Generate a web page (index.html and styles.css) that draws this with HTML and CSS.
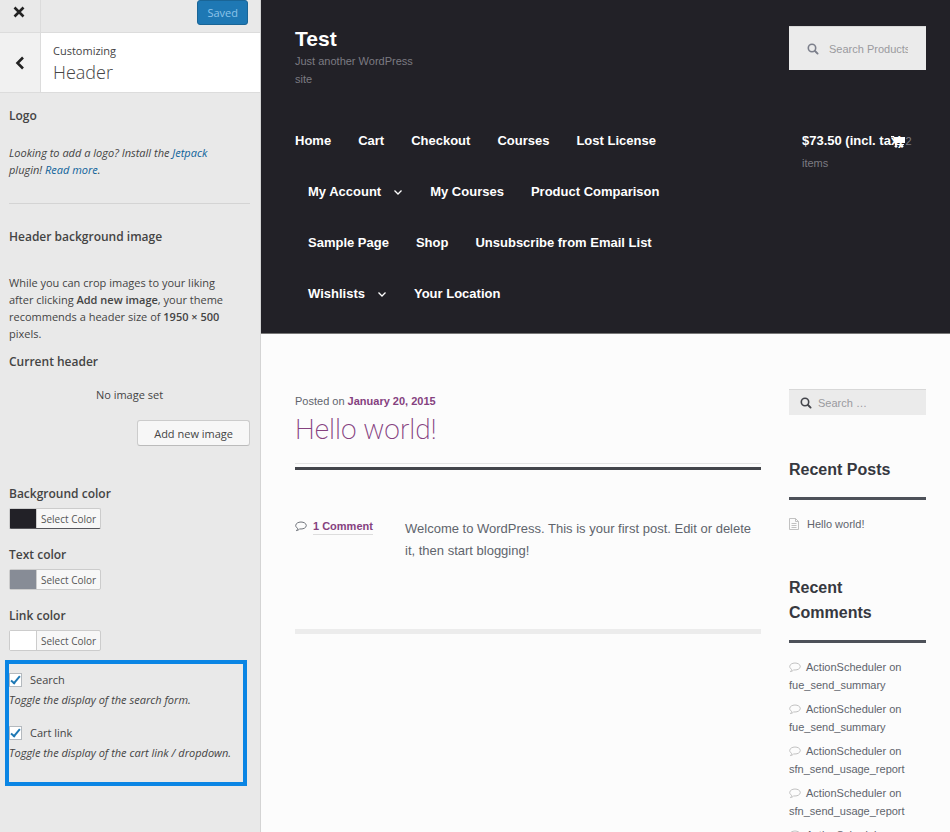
FILE: index.html
```html
<!DOCTYPE html>
<html lang="en">
<head>
    <meta charset="UTF-8">
    <meta name="viewport" content="width=device-width, initial-scale=1.0">
    <title>Customize: Header</title>
    <link rel="stylesheet" href="styles.css">
</head>
<body>
    <!-- Shared icons -->
    <svg class="sprite" aria-hidden="true">
        <symbol id="icon-search" viewBox="0 0 12 12">
            <circle cx="5" cy="5" r="3.7" fill="none" stroke="currentColor" stroke-width="1.6"/>
            <path d="M8 8l2.600 2.600" stroke="currentColor" stroke-width="1.900" stroke-linecap="round"/>
        </symbol>
        <symbol id="icon-comment" viewBox="0 0 12 11">
            <path d="M6 1C3.200 1 .7 2.500 .7 4.500c0 1.200.8 2.200 2 2.900-.1.900-.6 1.600-1.300 2.200 1.300-.1 2.300-.6 3.100-1.700.5.100.9.100 1.500.1 2.800 0 5.300-1.500 5.300-3.500S8.800 1 6 1z" fill="none" stroke="currentColor" stroke-width="0.9"/>
        </symbol>
        <symbol id="icon-chevron" viewBox="0 0 10 10">
            <path d="M1.500 3.500L5 7l3.500-3.500" fill="none" stroke="currentColor" stroke-width="1.300"/>
        </symbol>
    </svg>

    <div class="customizer">
        <div class="controls">
            <div class="top-bar">
                <button class="close-btn" type="button" aria-label="Close">
                    <svg width="12" height="12" viewBox="0 0 12 12"><path d="M1.500 1.500l9 9M10.500 1.500l-9 9" stroke="currentColor" stroke-width="2.600"/></svg>
                </button>
                <button class="save-btn" type="button">Saved</button>
            </div>
            <div class="section-title">
                <button class="back-btn" type="button" aria-label="Back">
                    <svg width="10" height="14" viewBox="0 0 10 14"><path d="M8 1.500L2.500 7 8 12.500" fill="none" stroke="currentColor" stroke-width="2.600"/></svg>
                </button>
                <div class="section-name">
                    <span>Customizing</span>
                    <h1>Header</h1>
                </div>
            </div>

            <div class="panel">
                <section class="logo-section">
                    <h2>Logo</h2>
                    <p class="description">Looking to add a logo? Install the <a href="#">Jetpack</a> plugin! <a href="#">Read more</a>.</p>
                </section>

                <section class="image-section">
                    <h2>Header background image</h2>
                    <p class="image-help">While you can crop images to your liking after clicking <strong>Add new image</strong>, your theme recommends a header size of <strong>1950 × 500</strong> pixels.</p>
                    <h2>Current header</h2>
                    <p class="no-image">No image set</p>
                    <button class="add-btn" type="button">Add new image</button>
                </section>

                <section class="color">
                    <h2>Background color</h2>
                    <button class="color-btn dark" type="button"><span class="swatch"></span>Select Color</button>
                </section>
                <section class="color">
                    <h2>Text color</h2>
                    <button class="color-btn gray" type="button"><span class="swatch"></span>Select Color</button>
                </section>
                <section class="color">
                    <h2>Link color</h2>
                    <button class="color-btn white" type="button"><span class="swatch"></span>Select Color</button>
                </section>

                <div class="toggles">
                    <div class="toggle">
                        <label><input type="checkbox" checked>Search</label>
                        <p class="description">Toggle the display of the search form.</p>
                    </div>
                    <div class="toggle">
                        <label><input type="checkbox" checked>Cart link</label>
                        <p class="description">Toggle the display of the cart link / dropdown.</p>
                    </div>
                </div>
            </div>
        </div>

        <div class="preview">
            <header class="site-header">
                <div class="header-row">
                    <div class="branding">
                        <a class="site-title" href="#">Test</a>
                        <p>Just another WordPress site</p>
                    </div>
                    <form class="product-search">
                        <svg width="12" height="12"><use href="#icon-search"/></svg>
                        <input type="text" placeholder="Search Products…" aria-label="Search products">
                    </form>
                </div>
                <div class="header-row">
                    <nav class="main-nav">
                        <a href="#">Home</a>
                        <a href="#">Cart</a>
                        <a href="#">Checkout</a>
                        <a href="#">Courses</a>
                        <a href="#">Lost License</a>
                        <a href="#">My Account<svg width="10" height="10"><use href="#icon-chevron"/></svg></a>
                        <a href="#">My Courses</a>
                        <a href="#">Product Comparison</a>
                        <a href="#">Sample Page</a>
                        <a href="#">Shop</a>
                        <a href="#">Unsubscribe from Email List</a>
                        <a href="#">Wishlists<svg width="10" height="10"><use href="#icon-chevron"/></svg></a>
                        <a href="#">Your Location</a>
                    </nav>
                    <a class="cart-link" href="#">
                        <strong>$73.50 (incl. tax)</strong> <span>2 items</span>
                        <svg class="cart-icon" width="14" height="13" viewBox="0 0 14 13"><path d="M0 1h3l.4 1H14v6H5l.2 1H13v1H4L2.400 2.500H0z" fill="currentColor"/><circle cx="5" cy="11.300" r="1.400" fill="currentColor"/><circle cx="11" cy="11.300" r="1.400" fill="currentColor"/></svg>
                    </a>
                </div>
            </header>

            <div class="content">
                <main class="post">
                    <div class="post-header">
                        <p class="posted">Posted on <a href="#">January 20, 2015</a></p>
                        <h1><a href="#">Hello world!</a></h1>
                    </div>
                    <div class="post-body">
                        <div class="post-meta">
                            <svg width="12" height="11"><use href="#icon-comment"/></svg>
                            <a href="#">1 Comment</a>
                        </div>
                        <p>Welcome to WordPress. This is your first post. Edit or delete it, then start blogging!</p>
                    </div>
                </main>

                <aside class="sidebar">
                    <form class="site-search">
                        <svg width="12" height="12"><use href="#icon-search"/></svg>
                        <input type="text" placeholder="Search …" aria-label="Search">
                    </form>
                    <section class="widget">
                        <h2>Recent Posts</h2>
                        <ul>
                            <li class="recent-post">
                                <svg width="10" height="12" viewBox="0 0 10 12"><path d="M.5.500h6l3 3v8h-9zM6.500.500v3h3M2.500 5.500h5M2.500 7.500h5M2.500 9.500h5" fill="none" stroke="currentColor" stroke-width="0.900"/></svg>
                                <a href="#">Hello world!</a>
                            </li>
                        </ul>
                    </section>
                    <section class="widget">
                        <h2>Recent Comments</h2>
                        <ul>
                            <li><svg width="12" height="11"><use href="#icon-comment"/></svg>ActionScheduler on <a href="#">fue_send_summary</a></li>
                            <li><svg width="12" height="11"><use href="#icon-comment"/></svg>ActionScheduler on <a href="#">fue_send_summary</a></li>
                            <li><svg width="12" height="11"><use href="#icon-comment"/></svg>ActionScheduler on <a href="#">sfn_send_usage_report</a></li>
                            <li><svg width="12" height="11"><use href="#icon-comment"/></svg>ActionScheduler on <a href="#">sfn_send_usage_report</a></li>
                            <li><svg width="12" height="11"><use href="#icon-comment"/></svg>ActionScheduler on <a href="#">sfn_send_usage_report</a></li>
                        </ul>
                    </section>
                </aside>
            </div>
        </div>
    </div>
</body>
</html>
```

FILE: styles.css
```css
*, *::before, *::after { box-sizing: border-box; }
body { margin: 0; }
h1, h2, p, ul { margin: 0; padding: 0; }
ul { list-style: none; }
a { text-decoration: none; color: inherit; }
button, input { font-family: inherit; }
.sprite { display: none; }

.customizer {
    display: flex;
    height: 100vh;
}

/* Controls column */
.controls {
    flex: none;
    width: 261px;
    background-color: #e9e9e9;
    border-right: 1px solid #d4d4d4;
    font-family: "Open Sans", sans-serif;
    font-size: 11px;
    line-height: 17px;
    color: #444;
    overflow: hidden;
}

.top-bar {
    display: flex;
    justify-content: space-between;
    align-items: flex-start;
    height: 33px;
    padding-right: 12px;
    border-bottom: 1px solid #dcdcdc;
}

.close-btn, .back-btn {
    display: flex;
    align-items: center;
    justify-content: center;
    width: 41px;
    padding: 0;
    border: none;
    border-right: 1px solid #dcdcdc;
    background: none;
    color: #222;
}

.close-btn { height: 32px; padding-bottom: 8px; padding-right: 2px; }
.back-btn { background-color: #f1f1f1; }

.save-btn {
    height: 25px;
    padding: 0 9px;
    background-color: #1e78b4;
    border: 1px solid #1a6596;
    border-radius: 3px;
    color: #8cc4ea;
    font-size: 11px;
}

.section-title {
    display: flex;
    height: 60px;
    background-color: #fff;
    border-bottom: 1px solid #dcdcdc;
}

.section-name { padding: 9px 12px; }

.section-name h1 {
    font-size: 18px;
    font-weight: 300;
    line-height: 26px;
}

.panel { padding: 14px 10px 14px 9px; }

.panel h2 {
    font-size: 12px;
    font-weight: 600;
    line-height: 18px;
}

.description { font-style: italic; }
.description a { color: #0e6299; }

.logo-section {
    padding-bottom: 25px;
    border-bottom: 1px solid #d4d4d4;
    margin-bottom: 24px;
}

.logo-section .description { margin-top: 19px; padding-right: 14px; }

.image-section {
    display: flex;
    flex-direction: column;
    margin-bottom: 39px;
}

.image-section strong { font-weight: 600; }
.image-help { margin: 28px 0 11px; padding-right: 14px; }
.no-image { margin: 15px 0 17px; text-align: center; }

.add-btn {
    align-self: flex-end;
    height: 26px;
    padding: 0 16px;
    background-color: #f7f7f7;
    border: 1px solid #ccc;
    border-bottom-color: #bbb;
    border-radius: 3px;
    color: #444;
    font-size: 11px;
}

.color { margin-bottom: 17px; }

.color-btn {
    display: flex;
    align-items: center;
    height: 21px;
    margin-top: 5px;
    padding: 0 4px 0 0;
    background-color: #f7f7f7;
    border: 1px solid #ccc;
    border-radius: 2px;
    color: #555;
    font-size: 10px;
}

.swatch {
    width: 27px;
    height: 19px;
    margin-right: 4px;
    border-right: 1px solid #ccc;
}

.dark { border-bottom-color: #55555a; }
.dark .swatch { background-color: #222127; }
.gray .swatch { background-color: #878c96; }
.white .swatch { background-color: #fff; }

.toggles {
    margin: -8px 3px 0 -4px;
    padding: 7px 0 21px;
    border: 4px solid #0a85e4;
}

.toggle + .toggle { margin-top: 16px; }

.toggle label {
    display: flex;
    align-items: center;
    gap: 8px;
    margin-bottom: 3px;
}

.toggle input {
    appearance: none;
    display: flex;
    justify-content: center;
    width: 13px;
    height: 14px;
    margin: 0;
    background-color: #fff;
    border: 1px solid #b4b9be;
}

.toggle input:checked::before {
    content: "";
    width: 5px;
    height: 10px;
    border: solid #1e78b4;
    border-width: 0 2px 2px 0;
    transform: rotate(40deg);
}

/* Site preview */
.preview {
    flex: 1;
    min-width: 0;
    overflow: hidden;
    background-color: #fcfcfc;
    font-family: "Liberation Sans", Arial, sans-serif;
    font-size: 11px;
    line-height: 18px;
    color: #60646c;
}

.site-header {
    padding: 26px 24px 14px 34px;
    background-color: #222127;
    border-bottom: 1px solid #777;
    color: #7c7b82;
}

.header-row {
    display: flex;
    justify-content: space-between;
    align-items: flex-start;
    gap: 28px;
}

.branding { width: 130px; margin-bottom: 27px; }

.site-title {
    display: block;
    font-size: 21px;
    font-weight: bold;
    line-height: 26px;
    color: #fff;
}

.product-search, .site-search {
    display: flex;
    align-items: center;
    width: 137px;
    background-color: #ebebeb;
    border-top: 1px solid #d8d8d8;
}

.product-search {
    gap: 10px;
    height: 44px;
    padding: 0 18px;
    color: #7c7f8b;
}

.site-search {
    gap: 6px;
    height: 26px;
    padding: 0 11px;
    color: #43454b;
}

.product-search svg, .site-search svg { flex: none; }

.preview input {
    flex: 1;
    min-width: 0;
    padding: 0;
    border: none;
    background: none;
    font-size: 11px;
}

.preview input::placeholder { color: #9a9a9e; }

.main-nav {
    flex: 1;
    display: flex;
    flex-wrap: wrap;
    column-gap: 1px;
}

.main-nav a {
    padding: 0 13px;
    font-size: 13px;
    font-weight: bold;
    line-height: 51px;
    color: #fff;
}

.main-nav a:first-child { padding-left: 0; }
.main-nav svg { margin-left: 12px; vertical-align: -1px; }

.cart-link {
    position: relative;
    width: 137px;
    padding: 15px 13px;
    line-height: 22px;
}

.cart-link strong { font-size: 13px; color: #fff; }

/* The cart sits over the end of the amount */
.cart-icon {
    position: absolute;
    top: 20px;
    right: 21px;
    color: #fff;
}

.content {
    display: flex;
    align-items: flex-start;
    gap: 28px;
    padding: 55px 24px 0 34px;
}

.post {
    flex: 1;
    padding: 3px 0 67px;
    border-bottom: 5px solid #ececec;
}

.posted a, .post-meta a { font-weight: bold; color: #85417f; }

.post-header h1 {
    margin: 2px 0 15px;
    font-family: Roboto, sans-serif;
    font-size: 28px;
    font-weight: 200;
    line-height: 36px;
    color: #85417f;
}

.post-header::after {
    content: "";
    display: block;
    height: 7px;
    border-top: 1px solid #e4e4e4;
    border-bottom: 3px solid #43454b;
}

.post-body {
    display: flex;
    margin-top: 48px;
}

.post-body p {
    flex: 1;
    font-size: 13px;
    line-height: 22px;
}

.post-meta {
    display: flex;
    align-items: center;
    align-self: flex-start;
    gap: 6px;
    width: 110px;
}

.post-meta a { line-height: 16px; border-bottom: 1px solid #ddd; }

.sidebar { width: 137px; }
.widget { margin-top: 42px; }

.widget h2 {
    margin-bottom: 15px;
    padding-bottom: 15px;
    border-bottom: 3px solid #4d5159;
    font-size: 16px;
    line-height: 25px;
    color: #36383f;
}

.widget li { margin-bottom: 6px; overflow-wrap: break-word; }
.widget li svg { margin-right: 5px; vertical-align: -2px; color: #bbb; }

.recent-post {
    display: flex;
    align-items: center;
    gap: 3px;
}
```
